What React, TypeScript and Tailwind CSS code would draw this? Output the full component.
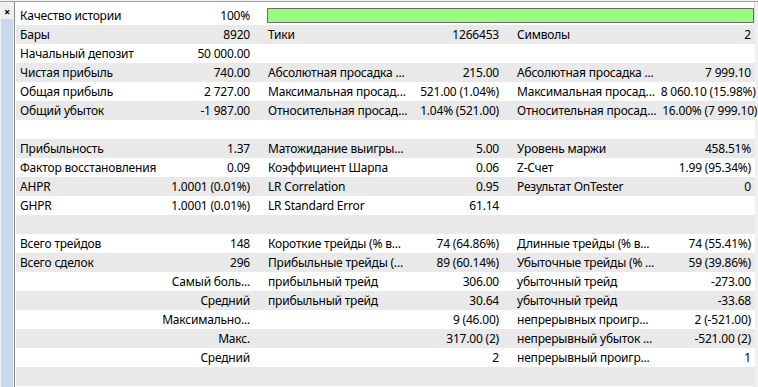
import React from "react"

type Row = [string, string, string, string, string, string]

const rows: Row[] = [
    ["Бары", "8920", "Тики", "1266453", "Символы", "2"],
    ["Начальный депозит", "50 000.00", "", "", "", ""],
    ["Чистая прибыль", "740.00", "Абсолютная просадка ...", "215.00", "Абсолютная просадка ...", "7 999.10"],
    ["Общая прибыль", "2 727.00", "Максимальная просад...", "521.00 (1.04%)", "Максимальная просад...", "8 060.10 (15.98%)"],
    ["Общий убыток", "-1 987.00", "Относительная просад...", "1.04% (521.00)", "Относительная просад...", "16.00% (7 999.10)"],
    ["", "", "", "", "", ""],
    ["Прибыльность", "1.37", "Матожидание выигры...", "5.00", "Уровень маржи", "458.51%"],
    ["Фактор восстановления", "0.09", "Коэффициент Шарпа", "0.06", "Z-Счет", "1.99 (95.34%)"],
    ["AHPR", "1.0001 (0.01%)", "LR Correlation", "0.95", "Результат OnTester", "0"],
    ["GHPR", "1.0001 (0.01%)", "LR Standard Error", "61.14", "", ""],
    ["", "", "", "", "", ""],
    ["Всего трейдов", "148", "Короткие трейды (% в...", "74 (64.86%)", "Длинные трейды (% в...", "74 (55.41%)"],
    ["Всего сделок", "296", "Прибыльные трейды (...", "89 (60.14%)", "Убыточные трейды (% ...", "59 (39.86%)"],
    ["", "Самый боль...", "прибыльный трейд", "306.00", "убыточный трейд", "-273.00"],
    ["", "Средний", "прибыльный трейд", "30.64", "убыточный трейд", "-33.68"],
    ["", "Максимально...", "", "9 (46.00)", "непрерывных проигр...", "2 (-521.00)"],
    ["", "Макс.", "", "317.00 (2)", "непрерывный убыток ...", "-521.00 (2)"],
    ["", "Средний", "", "2", "непрерывный проигр...", "1"],
    ["", "", "", "", "", ""],
]

const Pair = ({ label, value, last }: { label: string; value: string; last?: boolean }) => (
    <div className={`flex justify-between gap-[6px] pl-[4px] ${last ? "pr-[4px]" : "pr-[14px]"}`}>
        <span className="whitespace-nowrap">{label}</span>
        <span className="whitespace-nowrap">{value}</span>
    </div>
)

const App = () => {
    return (
        <div
            className="w-[758px] h-[387px] overflow-hidden bg-[#f0f0f0] flex flex-col text-[12px] tracking-[-0.2px] text-black"
            style={{ fontFamily: '"Noto Sans", "Open Sans", sans-serif' }}
        >
            <div className="h-px mt-px bg-[#a0a0a0]" />
            <div className="flex flex-1 min-h-0">
                <div className="w-[14px] flex flex-col">
                    <div className="h-[17px] flex items-start justify-center pt-[4px] text-[11px] leading-[11px] font-bold">×</div>
                    <div className="flex-1 ml-px w-[12px] bg-[#cbdaea]" />
                </div>
                <div className="w-px bg-[#8c8c8c]" />
                <div className="w-[740px] bg-white pl-px pt-[4px] border-r border-[#dadada]">
                    <div className="grid grid-cols-[248px_249px_242px] leading-[19px]">
                        <Pair label="Качество истории" value="100%" />
                        <div className="col-span-2 h-[19px] pl-[3px] pr-px pt-[2px]">
                            <div className="h-[15px] border border-[#6e6e6e] bg-[#98fa80]" />
                        </div>
                        {rows.map((r, i) => (
                            <div key={i} className={`col-span-3 grid grid-cols-subgrid h-[19px] ${i % 2 === 0 ? "bg-[#e9e9e9]" : "bg-white"}`}>
                                <Pair label={r[0]} value={r[1]} />
                                <Pair label={r[2]} value={r[3]} />
                                <Pair label={r[4]} value={r[5]} last />
                            </div>
                        ))}
                    </div>
                </div>
            </div>
        </div>
    )
}

export default App
